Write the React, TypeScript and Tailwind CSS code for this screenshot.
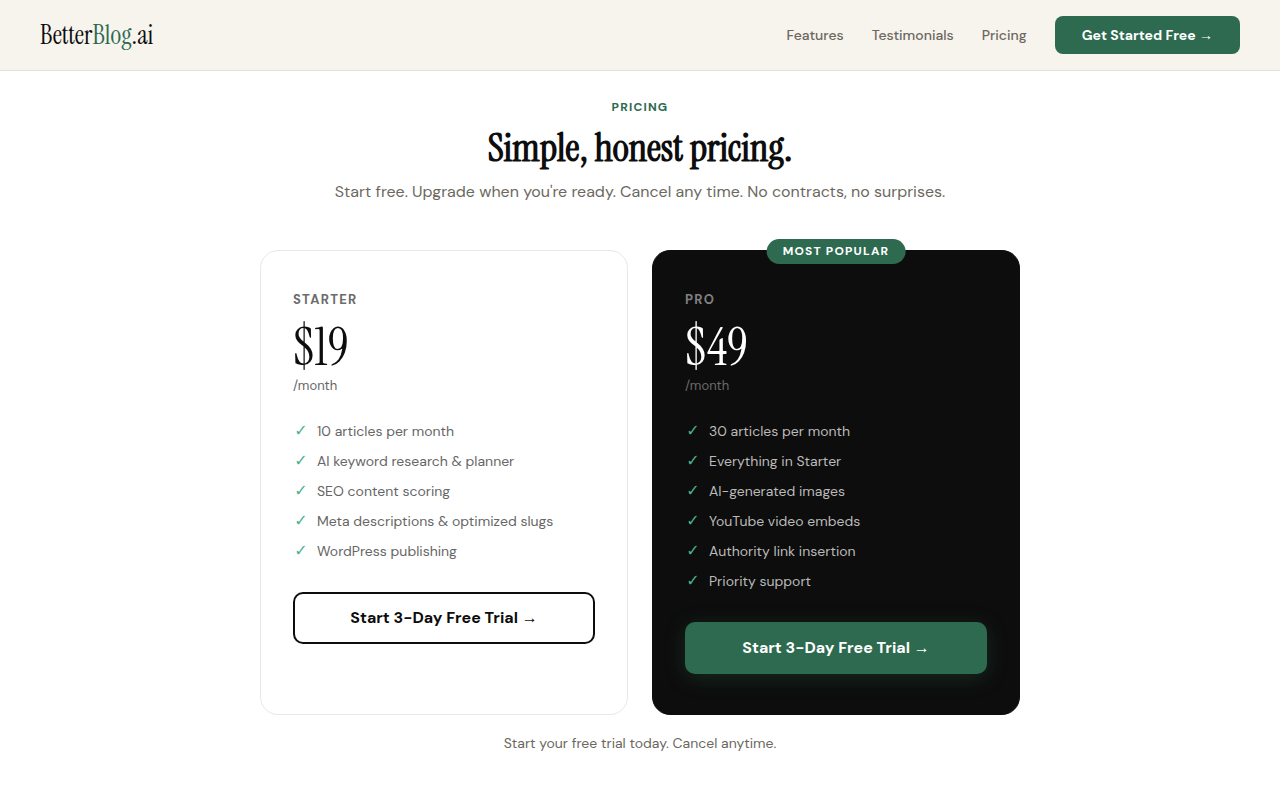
type Plan = {
  name: string;
  price: string;
  features: string[];
  popular?: boolean;
};

const NAV_LINKS = [
  { label: "Features", href: "#features" },
  { label: "Testimonials", href: "#testimonials" },
  { label: "Pricing", href: "#pricing" },
];

const PLANS: Plan[] = [
  {
    name: "Starter",
    price: "$19",
    features: [
      "10 articles per month",
      "AI keyword research & planner",
      "SEO content scoring",
      "Meta descriptions & optimized slugs",
      "WordPress publishing",
    ],
  },
  {
    name: "Pro",
    price: "$49",
    popular: true,
    features: [
      "30 articles per month",
      "Everything in Starter",
      "AI-generated images",
      "YouTube video embeds",
      "Authority link insertion",
      "Priority support",
    ],
  },
];

function Arrow() {
  return <span className="font-['Liberation_Sans',sans-serif]">→</span>;
}

function Header() {
  return (
    <header className="sticky top-0 z-20 border-b border-[#e5e0da] bg-[#f7f3ed]">
      <div className="flex items-center justify-between px-10 py-4">
        <a
          href="#top"
          className="font-['Instrument_Serif','Liberation_Serif',serif] text-[26px] leading-9 text-[#0d0d0d]"
        >
          Better<span className="text-[#2d6a4f]">Blog</span>.ai
        </a>
        <nav className="flex items-center gap-7">
          {NAV_LINKS.map((link) => (
            <a
              key={link.href}
              href={link.href}
              className="text-sm font-medium text-[#6b6860] hover:text-[#0d0d0d]"
            >
              {link.label}
            </a>
          ))}
          <a
            href="#pricing"
            className="rounded-lg bg-[#2d6a4f] px-[27px] py-2 text-sm leading-[22px] font-bold text-white"
          >
            Get Started Free <Arrow />
          </a>
        </nav>
      </div>
    </header>
  );
}

function PlanCard({ plan }: { plan: Plan }) {
  const { popular } = plan;

  return (
    <article
      className={[
        "relative rounded-[18px] border px-8 py-10",
        popular
          ? "border-[#0d0d0d] bg-[#0d0d0d] text-white"
          : "border-[#e8e8e8] bg-white text-[#0d0d0d]",
      ].join(" ")}
    >
      {popular && (
        <span className="absolute -top-3 left-1/2 -translate-x-1/2 rounded-full bg-[#2d6a4f] px-4 py-1 text-xs leading-[17px] font-bold tracking-widest whitespace-nowrap text-white uppercase">
          Most Popular
        </span>
      )}
      <h3
        className={[
          "text-[13px] leading-[17px] font-bold tracking-widest uppercase",
          popular ? "text-[#808080]" : "text-[#6b6b6b]",
        ].join(" ")}
      >
        {plan.name}
      </h3>
      <p className="mt-3 font-['Instrument_Serif','Liberation_Serif',serif] text-[52px] leading-[56px]">
        {plan.price}
      </p>
      <p
        className={[
          "text-[13px] leading-5",
          popular ? "text-[#6b6b6b]" : "text-[#666666]",
        ].join(" ")}
      >
        /month
      </p>
      <ul
        className={[
          "mt-5 mb-[26px] text-sm",
          popular ? "text-[#bababa]" : "text-[#666666]",
        ].join(" ")}
      >
        {plan.features.map((feature) => (
          <li key={feature} className="flex items-center gap-2 leading-[30px]">
            <span
              aria-hidden="true"
              className="w-4 text-center font-['DejaVu_Sans',sans-serif] text-base leading-[30px] text-[#4bb28c]"
            >
              ✓
            </span>
            {feature}
          </li>
        ))}
      </ul>
      <a
        href="#signup"
        className={[
          "block rounded-[10px] border-2 py-3 text-center text-base leading-6 font-bold",
          popular
            ? "border-[#2d6a4f] bg-[#2d6a4f] text-white shadow-[0_4px_20px_rgba(45,106,79,0.3)]"
            : "border-[#0d0d0d] bg-white text-[#0d0d0d]",
        ].join(" ")}
      >
        Start 3-Day Free Trial <Arrow />
      </a>
    </article>
  );
}

export default function App() {
  return (
    <div
      id="top"
      className="min-h-screen bg-white font-['DM_Sans','Inter',sans-serif] text-[#0d0d0d]"
    >
      <Header />
      <main id="pricing" className="px-10 pt-7 pb-12">
        <div className="text-center">
          <p className="text-xs font-bold tracking-widest text-[#2d6a4f] uppercase">
            Pricing
          </p>
          <h2 className="mt-2 font-['Instrument_Serif','Liberation_Serif',serif] text-[39px] leading-[50px] font-bold">
            Simple, honest pricing.
          </h2>
          <p className="mt-1.5 text-base leading-[26px] text-[#6b6860]">
            Start free. Upgrade when you're ready. Cancel any time. No
            contracts, no surprises.
          </p>
        </div>
        <div className="mx-auto mt-[45px] grid max-w-[760px] gap-6 md:grid-cols-2">
          {PLANS.map((plan) => (
            <PlanCard key={plan.name} plan={plan} />
          ))}
        </div>
        <p className="mt-5 text-center text-sm leading-4 text-[#6b6860]">
          Start your free trial today. Cancel anytime.
        </p>
      </main>
    </div>
  );
}
